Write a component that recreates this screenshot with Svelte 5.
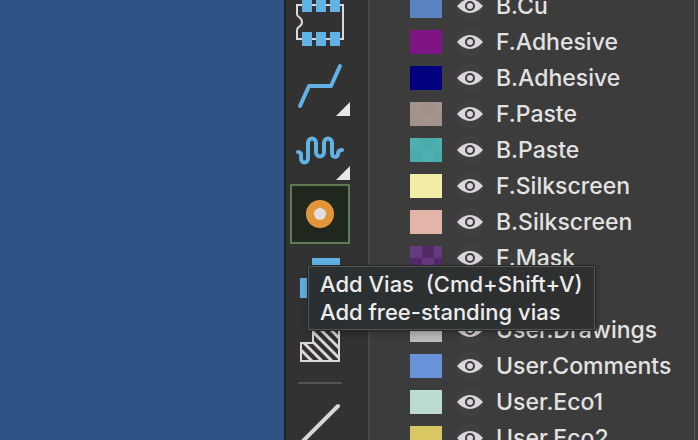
<script>
  const layers = [
    { name: 'B.Cu', color: '#5b82c3' },
    { name: 'F.Adhesive', color: '#7d1584' },
    { name: 'B.Adhesive', color: '#020281' },
    { name: 'F.Paste', color: '#a5938d', alt: '#a2918b' },
    { name: 'B.Paste', color: '#4eb1b0', alt: '#4aacac' },
    { name: 'F.Silkscreen', color: '#f1eda5' },
    { name: 'B.Silkscreen', color: '#e3b4a8' },
    { name: 'F.Mask', color: '#643a80', alt: '#532968' },
    { name: 'B.Mask', color: '#2c8a80', alt: '#237068' },
    { name: 'User.Drawings', color: '#bdbdbd' },
    { name: 'User.Comments', color: '#6893d9' },
    { name: 'User.Eco1', color: '#bbdad1' },
    { name: 'User.Eco2', color: '#d8c863' }
  ];
</script>

<div class="app">
  <main class="canvas"></main>

  <nav class="toolbar" aria-label="Placement tools">
    <button aria-label="Add footprint">
      <svg viewBox="0 0 48 48">
        <path d="M1 7H47V41H1V32Q1 30 3 29Q6 27 6 24Q6 21 3 19Q1 18 1 16Z" fill="none" stroke="#ddd5dd" stroke-width="2" />
        <path d="M6 0h10v14H6zM20 0h10v14H20zM34 0h10v14H34zM6 34h10v14H6zM20 34h10v14H20zM34 34h10v14H34z" fill="#62b2e6" />
      </svg>
    </button>
    <button class="more" aria-label="Route tracks">
      <svg viewBox="0 0 48 48">
        <path d="M4 44L13 24H35L44 4" fill="none" stroke="#62b2e6" stroke-width="4" stroke-linecap="round" stroke-linejoin="round" />
      </svg>
    </button>
    <button class="more" aria-label="Tune track length">
      <svg viewBox="0 0 48 48">
        <path d="M2 26C6 26 5 29 5 32C5 38 12 38 12 32V17C12 11 20 11 20 17V26C20 32 28 32 28 26V17C28 11 36 11 36 17V27C36 32 42 32 42 28Q42 24 46 24" fill="none" stroke="#62b2e6" stroke-width="4" stroke-linecap="round" />
      </svg>
    </button>
    <button class="active" aria-label="Add vias" aria-describedby="tip">
      <svg viewBox="0 0 48 48">
        <circle cx="24" cy="24" r="14" fill="#e2963b" />
        <circle cx="24" cy="24" r="6" fill="#e0dfe1" />
      </svg>
    </button>
    <button aria-label="Add filled zone">
      <svg viewBox="0 0 48 48">
        <path d="M16 4H44V44H4V24H16Z" fill="#62b2e6" />
      </svg>
    </button>
    <button aria-label="Add rule area">
      <svg viewBox="0 0 48 48">
        <defs><clipPath id="area"><path d="M17 5H43V43H5V25H17Z" /></clipPath></defs>
        <g clip-path="url(#area)">
          <path d="M-23 4l40 40M-13 4l40 40M-3 4l40 40M7 4l40 40M17 4l40 40M27 4l40 40M37 4l40 40" stroke="#ddd5dd" stroke-width="3" />
        </g>
        <path d="M17 5H43V43H5V25H17Z" fill="none" stroke="#ddd5dd" stroke-width="2" />
      </svg>
    </button>
    <hr />
    <button aria-label="Draw line">
      <svg viewBox="0 0 48 48">
        <path d="M6 42L42 6" stroke="#ddd5dd" stroke-width="4" stroke-linecap="round" />
      </svg>
    </button>
  </nav>

  <aside class="panel">
    <ul>
      {#each layers as layer}
        <li>
          <span class="swatch" class:checked={layer.alt} style:--c={layer.color} style:--a={layer.alt}></span>
          <button class="eye" aria-label="Toggle {layer.name}">
            <svg viewBox="0 0 28 28">
              <path d="M1 14Q7 7 14 7T27 14Q21 21 14 21T1 14Z" fill="#ddd5dd" />
              <circle cx="14" cy="14" r="4" fill="#ddd5dd" stroke="#3c3c3c" stroke-width="2" />
            </svg>
          </button>
          <span class="name">{layer.name}</span>
        </li>
      {/each}
    </ul>
  </aside>

  <div class="tooltip" role="tooltip" id="tip">
    <div>Add Vias&nbsp; (Cmd+Shift+V)</div>
    <div>Add free-standing vias</div>
  </div>
</div>

<style>
  .app {
    position: relative;
    display: flex;
    height: 100vh;
    overflow: hidden;
    background: #3c3c3c;
    color: #e2e2e2;
    font-family: Inter, "Liberation Sans", sans-serif;
  }
  .canvas {
    flex: 1;
    background: #2e5486;
  }
  button {
    padding: 0;
    border: 0;
    background: none;
  }
  svg {
    display: block;
  }
  .toolbar {
    flex: none;
    display: flex;
    flex-direction: column;
    align-items: flex-start;
    gap: 4px;
    margin-top: -8px;
    padding: 0 18px 0 4px;
    border-left: 2px solid #1d2028;
    border-right: 2px solid #484848;
    background: #323232;
  }
  .toolbar button {
    position: relative;
    flex: none;
    box-sizing: border-box;
    width: 60px;
    height: 60px;
    padding: 4px;
    border: 2px solid transparent;
  }
  .toolbar svg {
    width: 48px;
    height: 48px;
  }
  .toolbar .active {
    border-color: #5f7a55;
    background: #20271e;
  }
  .more::after {
    content: "";
    position: absolute;
    right: -2px;
    bottom: -2px;
    width: 14px;
    height: 14px;
    background: #e8e8e8;
    clip-path: polygon(100% 0, 100% 100%, 0 100%);
  }
  hr {
    flex: none;
    width: 44px;
    height: 2px;
    margin: 6px 8px;
    border: 0;
    background: #555;
  }
  .panel {
    flex: none;
    box-sizing: border-box;
    width: 325px;
    margin-top: -12px;
    padding-left: 40px;
    border-right: 1px solid #565656;
  }
  .app::after {
    content: "";
    width: 3px;
  }
  ul {
    margin: 0;
    padding: 0;
    list-style: none;
  }
  li {
    display: flex;
    align-items: center;
    height: 36px;
  }
  .swatch {
    width: 32px;
    height: 24px;
    background: var(--c);
  }
  .checked {
    background: repeating-conic-gradient(var(--a) 0 25%, var(--c) 0 50%) 0 0 / 24px 24px;
  }
  .eye {
    width: 28px;
    height: 28px;
    margin: 0 12px 0 14px;
    border-radius: 50%;
    background: #404040;
  }
  .name {
    font-size: 23px;
    font-weight: 500;
    line-height: 36px;
  }
  .tooltip {
    position: absolute;
    left: 308px;
    top: 266px;
    padding: 3px 11px;
    border: 1px solid #545656;
    background: linear-gradient(90deg, #2a3032, #2f3030);
    box-shadow: 0 0 0 1px #262626, 0 3px 8px rgba(0, 0, 0, 0.3);
    color: #ececec;
    font-size: 22px;
    font-weight: 450;
    line-height: 28px;
    white-space: nowrap;
  }
</style>
